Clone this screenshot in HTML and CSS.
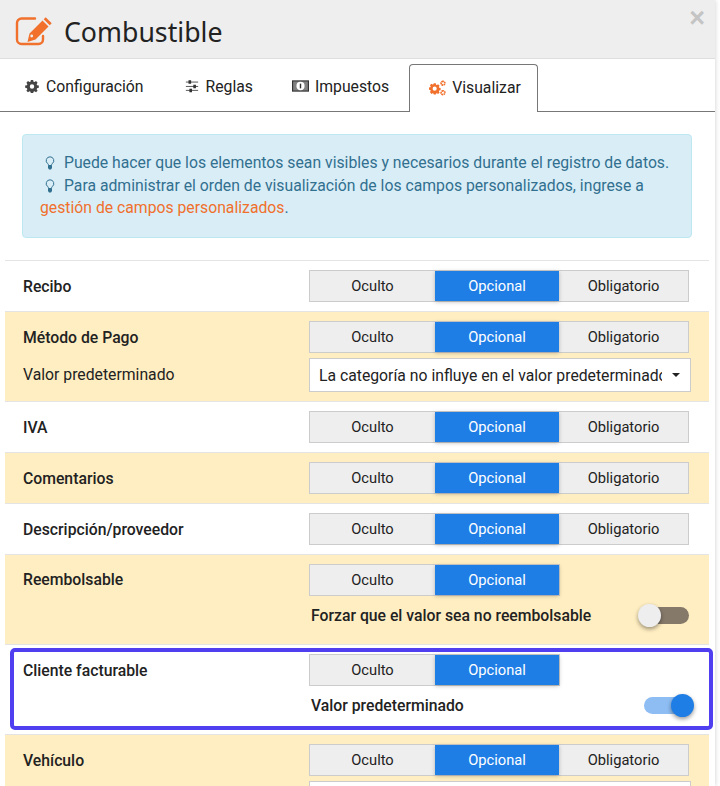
FILE: index.html
```html
<!DOCTYPE html>
<html lang="es">
<head>
<meta charset="utf-8">
<title>Combustible</title>
<link rel="stylesheet" href="styles.css">
</head>
<body>
<div class="modal">
  <header class="head">
    <svg class="head-icon" viewBox="0 0 38 34" width="38" height="34"><path d="M20 6.500H6.500a4.500 4.500 0 0 0-4.500 4.500v16.500a4.500 4.500 0 0 0 4.500 4.500h17a4.500 4.500 0 0 0 4.500-4.500V24" fill="none" stroke="#f0702c" stroke-width="2.400" stroke-linecap="round"/><path fill="#f0702c" d="M27.500 8.500l6 6-13 13-8 2.500 2-8.500zM28.700 7.300l6 6 2-2-6-6z"/><circle cx="16.700" cy="24" r="1.400" fill="#eee"/></svg>
    <h1 class="title">Combustible</h1>
    <span class="close">×</span>
  </header>
  <nav class="tabs">
    <a class="tab"><svg class="ti" viewBox="0 0 16 16"><path fill="#444" fill-rule="evenodd" d="M6.700 1h2.600l.4 2 1.200.5 1.700-1.100 1.800 1.800-1.100 1.700.5 1.200 2 .4v2.600l-2 .4-.5 1.200 1.100 1.700-1.800 1.800-1.700-1.100-1.200.5-.4 2H6.700l-.4-2-1.200-.5-1.700 1.100-1.800-1.800 1.100-1.700-.5-1.200-2-.4V7.500l2-.4.5-1.200-1.100-1.700 1.800-1.800 1.700 1.100 1.200-.5zM8 6a2.500 2.500 0 1 0 0 5 2.500 2.500 0 0 0 0-5z"/></svg>Configuración</a>
    <a class="tab"><svg class="ti" viewBox="0 0 16 16"><path stroke="#444" stroke-width="1" d="M1 3.500h14M1 8.500h14M1 13h14"/><path fill="#333" d="M4 1.500h3v4H4zM9.500 6.500h3v4h-3zM5 11h3v4H5z"/></svg>Reglas</a>
    <a class="tab"><svg class="ti ti-wide" viewBox="0 0 18 14"><rect x="0" y="1" width="18" height="12" fill="#333"/><path fill="#ddd" d="M1.200 2.200h15.600v9.600H1.200z" opacity=".45"/><ellipse cx="9" cy="7" rx="4.300" ry="4.400" fill="#fff"/><path stroke="#333" stroke-width="1.500" d="M9 4.500v5"/></svg>Impuestos</a>
    <a class="tab tab-active"><svg class="ti ti-wide ti-tall" viewBox="0 0 18 16"><path fill="#f0702c" fill-rule="evenodd" d="M5 3h2.200l.3 1.500.9.400 1.300-.8 1.500 1.500-.8 1.300.4.900 1.500.3v2.200l-1.500.3-.4.900.8 1.300-1.500 1.500-1.300-.8-.9.400-.3 1.100H5l-.3-1.100-.9-.4-1.300.8L1 12.300l.8-1.300-.4-.9L0 9.800V7.600l1.400-.3.400-.9L1 5.100l1.500-1.500 1.300.8.900-.4zM6 6.500a2.200 2.200 0 1 0 0 4.400 2.200 2.200 0 0 0 0-4.400z"/><path fill="none" stroke="#f0702c" stroke-width="1.800" stroke-dasharray="1.700 .5" d="M14.800.9a2 2 0 1 0 .01 0zM14.800 11a2 2 0 1 0 .01 0z"/></svg>Visualizar</a>
  </nav>
  <main class="content">
    <div class="alert">
      <p class="alert-line"><svg class="bulb" viewBox="0 0 10 14"><path fill="none" stroke="#31708f" stroke-width="1" d="M5 .8a3.800 3.800 0 0 0-2.200 6.900c.6.500.7 1.200.7 1.800h3c0-.6.100-1.300.7-1.800A3.800 3.800 0 0 0 5 .8z"/><path fill="#31708f" d="M3 9.500h4v2.500l-1 1.500H4L3 12z"/></svg>Puede hacer que los elementos sean visibles y necesarios durante el registro de datos.</p>
      <p class="alert-line"><svg class="bulb" viewBox="0 0 10 14"><path fill="none" stroke="#31708f" stroke-width="1" d="M5 .8a3.800 3.800 0 0 0-2.200 6.900c.6.500.7 1.200.7 1.800h3c0-.6.100-1.300.7-1.800A3.800 3.800 0 0 0 5 .8z"/><path fill="#31708f" d="M3 9.500h4v2.500l-1 1.500H4L3 12z"/></svg>Para administrar el orden de visualización de los campos personalizados, ingrese a</p>
      <p class="alert-last"><a class="alert-link">gestión de campos personalizados</a>.</p>
    </div>
    <section class="rows">
      <div class="row">
        <div class="label">Recibo</div>
        <div class="ctl"><div class="seg"><span>Oculto</span><span class="on">Opcional</span><span>Obligatorio</span></div></div>
      </div>
      <div class="row alt">
        <div class="label">Método de Pago</div>
        <div class="ctl"><div class="seg"><span>Oculto</span><span class="on">Opcional</span><span>Obligatorio</span></div></div>
        <div class="sublabel">Valor predeterminado</div>
        <div class="ctl"><div class="select"><span class="select-text">La categoría no influye en el valor predeterminado</span><i class="caret"></i></div></div>
      </div>
      <div class="row">
        <div class="label">IVA</div>
        <div class="ctl"><div class="seg"><span>Oculto</span><span class="on">Opcional</span><span>Obligatorio</span></div></div>
      </div>
      <div class="row alt">
        <div class="label">Comentarios</div>
        <div class="ctl"><div class="seg"><span>Oculto</span><span class="on">Opcional</span><span>Obligatorio</span></div></div>
      </div>
      <div class="row">
        <div class="label">Descripción/proveedor</div>
        <div class="ctl"><div class="seg"><span>Oculto</span><span class="on">Opcional</span><span>Obligatorio</span></div></div>
      </div>
      <div class="row alt row-tall">
        <div class="label">Reembolsable</div>
        <div class="ctl"><div class="seg seg-two"><span>Oculto</span><span class="on">Opcional</span></div>
          <div class="toggle-line"><span class="toggle-label">Forzar que el valor sea no reembolsable</span><span class="switch"><i class="knob"></i></span></div>
        </div>
      </div>
      <div class="row row-tall row-focus">
        <div class="label">Cliente facturable</div>
        <div class="ctl"><div class="seg seg-two"><span>Oculto</span><span class="on">Opcional</span></div>
          <div class="toggle-line"><span class="toggle-label">Valor predeterminado</span><span class="switch switch-on"><i class="knob"></i></span></div>
        </div>
      </div>
      <div class="row alt">
        <div class="label">Vehículo</div>
        <div class="ctl"><div class="seg"><span>Oculto</span><span class="on">Opcional</span><span>Obligatorio</span></div></div>
        <div class="sublabel"></div>
        <div class="ctl"><div class="select"></div></div>
      </div>
    </section>
  </main>
</div>
</body>
</html>
```
FILE: styles.css
```css
* { box-sizing: border-box; }
html, body { margin: 0; height: 786px; overflow: hidden; }
body { background: #fff; font-family: Roboto, "Liberation Sans", sans-serif; font-size: 15.750px; color: #222; }
.modal { width: 715px; height: 786px; background: #fff; overflow: hidden; box-shadow: 0 0 5px rgba(0,0,0,.2); }
.head { height: 59px; background: #eee; border-bottom: 1px solid #ddd; display: flex; align-items: center; padding: 0 15px; position: relative; }
.head-icon { flex: none; margin-right: 11px; }
.title { margin: 0; font-family: "Noto Sans", "Open Sans", sans-serif; font-weight: 400; font-size: 26.700px; color: #222; position: relative; top: 2px; }
.close { position: absolute; right: 10px; top: 4px; font-size: 27px; font-weight: 700; line-height: 28px; color: #c4c4c4; font-family: "Liberation Sans", sans-serif; }
.tabs { height: 53px; border-bottom: 1px solid #777; display: flex; align-items: flex-end; padding-left: 9px; }
.tab { height: 47px; display: flex; align-items: center; padding: 0 16px 3px; margin-right: 2px; color: #222; }
.tab:nth-child(2) { padding-left: 23px; padding-right: 24px; margin-right: 0; }
.tab:nth-child(3) { padding-left: 15px; padding-right: 20px; margin-right: 0; }
.tab-active { margin-bottom: -1px; height: 48px; background: #fff; border: 1px solid #777; border-bottom: 0; border-radius: 4px 4px 0 0; width: 129px; padding: 0 0 2px 19px; }
.ti { width: 14px; height: 14px; margin-right: 7px; flex: none; }
.ti-wide { width: 17px; margin-right: 6px; }
.ti-tall { height: 16px; }
.content { padding: 22px 6px 0 5px; }
.alert { margin: 0 17px 22px 17px; height: 104px; background: #d9edf7; border: 1px solid #bce8f1; border-radius: 4px; padding: 17px; color: #31708f; line-height: 22.500px; }
.alert-line { margin: 0; display: flex; align-items: center; padding-left: 5px; white-space: nowrap; }
.alert-last { margin: 0; }
.alert-link { color: #f0702c; }
.bulb { width: 10px; height: 14px; margin-right: 9px; flex: none; }
.rows { border-top: 1px solid #e4e4e4; }
.row { display: grid; grid-template-columns: 286px 1fr; align-items: center; padding: 9px 18px; row-gap: 5px; border-bottom: 1px solid #e4e4e4; min-height: 51px; }
.alt { background: #ffeec1; }
.row-tall { align-items: start; height: 90px; }
.row-focus { position: relative; }
.row-focus::after { content: ""; position: absolute; left: 5px; right: -4px; top: 3px; bottom: 4px; border: 4px solid #4f3ff0; border-radius: 5px; pointer-events: none; }
.label { font-weight: 500; color: #222; }
.row-tall .label { margin-top: 6px; }
.row-focus .label { margin-top: 7px; }
.sublabel { color: #222; margin-top: -1px; }
.seg { display: flex; width: 380px; height: 32px; border: 1px solid #ccc; background: #eee; font-size: 14.700px; }
.seg span { display: flex; align-items: center; justify-content: center; width: 125px; }
.seg span:last-child { flex: 1; }
.seg .on { width: 124px; background: #1f7ee6; color: #fff; box-shadow: 0 1px 4px rgba(0,0,0,.25); }
.seg-two { width: 251px; }
.select { width: 382px; height: 34px; background: #fff; border: 1px solid #ccc; display: flex; align-items: center; padding: 0 9px; }
.select-text { width: 343px; overflow: hidden; white-space: nowrap; }
.caret { margin-left: 10px; border: 4px solid transparent; border-top-color: #222; border-bottom: 0; }
.toggle-line { display: flex; align-items: center; justify-content: space-between; width: 380px; height: 36px; padding-left: 2px; margin-top: 1px; }
.toggle-label { font-weight: 500; color: #222; }
.switch { position: relative; width: 48px; height: 17px; border-radius: 9px; background: #85796a; }
.knob { position: absolute; left: -3px; top: -3px; width: 23px; height: 23px; border-radius: 50%; background: #eee; box-shadow: 0 2px 4px rgba(0,0,0,.4); }
.switch-on { background: #8dbdf3; margin-right: -3px; }
.switch-on .knob { left: auto; right: -2px; background: #1f7ee6; }
```
